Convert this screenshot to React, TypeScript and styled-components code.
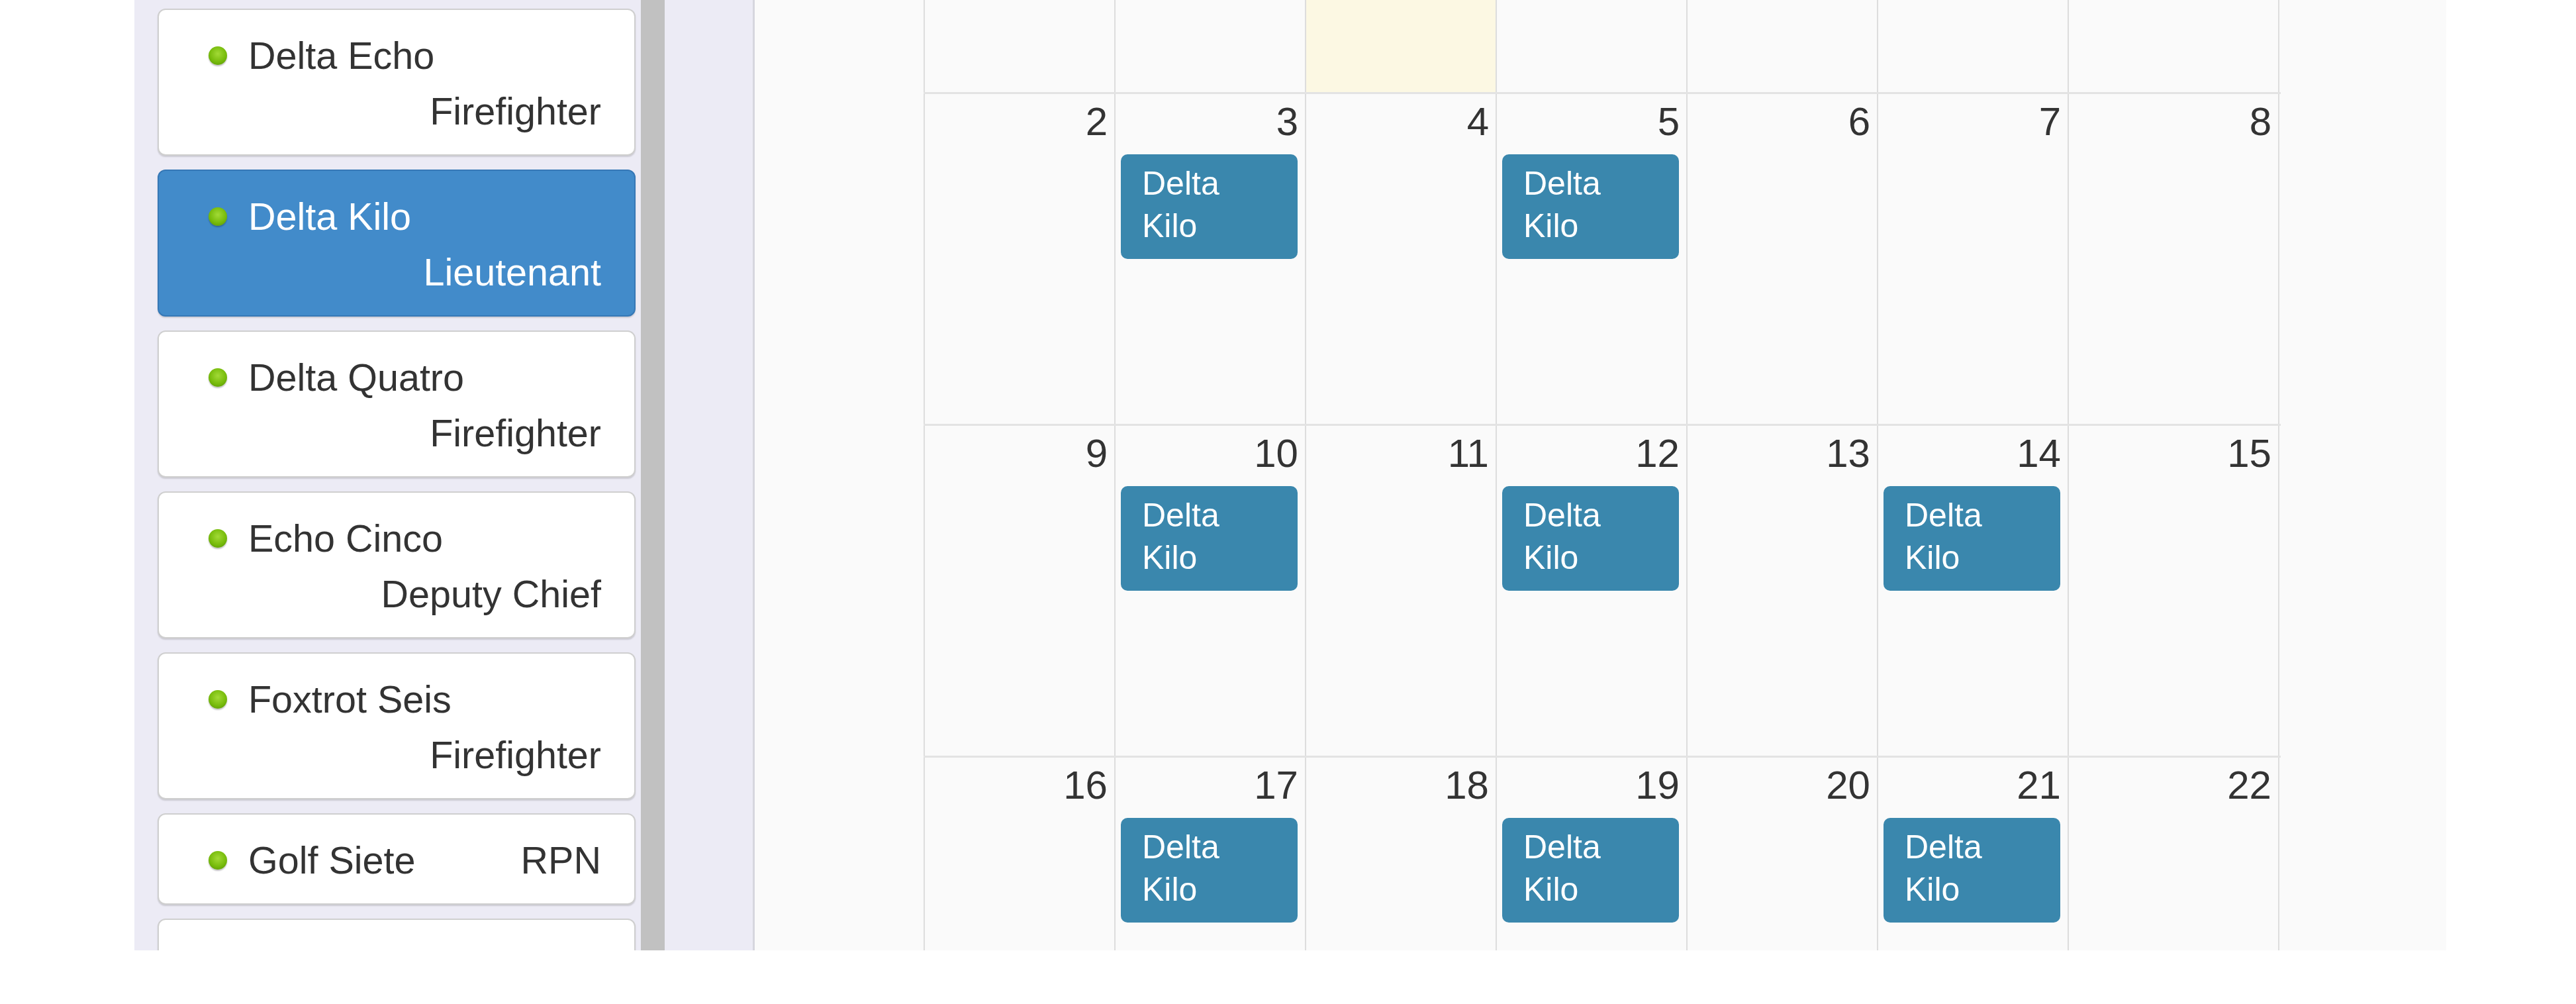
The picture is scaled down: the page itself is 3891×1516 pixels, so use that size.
import React from "react";
import styled, { createGlobalStyle } from "styled-components";

const GlobalStyle = createGlobalStyle`
  html, body {
    margin: 0;
    padding: 0;
    background: #fff;
  }
  body {
    font-family: "Liberation Sans", Arial, sans-serif;
    color: #333;
  }
`;

const SPage = styled.div`
  display: flex;
  height: 1435px;
  margin: 0 196px 0 203px;
  overflow: hidden;
`;

const SSidebar = styled.aside`
  display: flex;
  flex-shrink: 0;
  width: 934px;
  background: #ecebf5;
`;

const SStaffList = styled.div`
  display: flex;
  flex-direction: column;
  gap: 21px;
  width: 765px;
  padding: 13px 8px 0 35px;
  box-sizing: border-box;
`;

const SScrollThumb = styled.div`
  flex-shrink: 0;
  width: 36px;
  background: #c1c1c1;
`;

const SStaffCard = styled.div<{ $active?: boolean }>`
  display: flex;
  flex-wrap: wrap;
  align-items: center;
  flex-shrink: 0;
  padding: 27px 50px 23px 75px;
  border: 2px solid ${(p) => (p.$active ? "#3678b6" : "#cfcfcf")};
  border-radius: 12px;
  background: ${(p) => (p.$active ? "#428bca" : "#fff")};
  color: ${(p) => (p.$active ? "#fff" : "#333")};
  box-shadow: 0 2px 2px rgba(0, 0, 0, 0.14);
  font-size: 57.5px;
  line-height: 84px;
`;

const SNameGroup = styled.div`
  display: flex;
  align-items: center;
  gap: 32px;
  white-space: nowrap;
`;

const SStatusDot = styled.span`
  flex-shrink: 0;
  width: 28px;
  height: 28px;
  border-radius: 50%;
  background: radial-gradient(circle at 50% 40%, #a2da36 0%, #78bc0c 55%, #528f06 100%);
  box-shadow: 0 2px 2px rgba(0, 0, 0, 0.25);
`;

const SRole = styled.span`
  margin-left: auto;
  padding-left: 120px;
  white-space: nowrap;
`;

const SCalendar = styled.section`
  flex: 1;
  padding-left: 255px;
  border-left: 3px solid #d6d6de;
  background: #fafafa;
`;

const SWeek = styled.div<{ $height: number; $cut?: boolean }>`
  display: grid;
  grid-template-columns: repeat(6, 288px) 320px;
  box-sizing: border-box;
  width: 2050px;
  height: ${(p) => p.$height}px;
  border-top: ${(p) => (p.$cut ? "none" : "3px solid #e3e3e3")};
`;

const SDay = styled.div<{ $today?: boolean }>`
  display: flex;
  flex-direction: column;
  border-left: 2px solid #dddddd;
  background: ${(p) => (p.$today ? "#fcf8e3" : "transparent")};

  &:last-child {
    border-right: 2px solid #dddddd;
  }
`;

const SDayNum = styled.div`
  padding: 7px 10px 0 0;
  font-size: 60px;
  line-height: 69px;
  text-align: right;
  color: #333;
`;

const SEvent = styled.div`
  margin: 15px 11px 0 8px;
  padding: 12px 38px 18px 32px;
  border-radius: 10px;
  background: #3a87ad;
  color: #fff;
  font-size: 50px;
  line-height: 64px;
`;

type Staff = { name: string; role: string; active?: boolean };

const staff: Staff[] = [
  { name: "Delta Echo", role: "Firefighter" },
  { name: "Delta Kilo", role: "Lieutenant", active: true },
  { name: "Delta Quatro", role: "Firefighter" },
  { name: "Echo Cinco", role: "Deputy Chief" },
  { name: "Foxtrot Seis", role: "Firefighter" },
  { name: "Golf Siete", role: "RPN" },
  { name: "Hotel Ocho", role: "Firefighter" },
];

type Week = { start?: number; height: number; cut?: boolean; todayCol?: number; events: number[] };

const weeks: Week[] = [
  { height: 139, cut: true, todayCol: 2, events: [] },
  { start: 2, height: 501, events: [3, 5] },
  { start: 9, height: 501, events: [10, 12, 14] },
  { start: 16, height: 501, events: [17, 19, 21] },
];

export default function App() {
  return (
    <>
      <GlobalStyle />
      <SPage>
        <SSidebar>
          <SStaffList>
            {staff.map((s) => (
              <SStaffCard key={s.name} $active={s.active}>
                <SNameGroup>
                  <SStatusDot />
                  {s.name}
                </SNameGroup>
                <SRole>{s.role}</SRole>
              </SStaffCard>
            ))}
          </SStaffList>
          <SScrollThumb />
        </SSidebar>
        <SCalendar>
          {weeks.map((w, wi) => (
            <SWeek key={wi} $height={w.height} $cut={w.cut}>
              {Array.from({ length: 7 }, (_, i) => {
                const day = w.start !== undefined ? w.start + i : undefined;
                return (
                  <SDay key={i} $today={w.todayCol === i}>
                    {day !== undefined && <SDayNum>{day}</SDayNum>}
                    {day !== undefined && w.events.includes(day) && (
                      <SEvent>Delta Kilo</SEvent>
                    )}
                  </SDay>
                );
              })}
            </SWeek>
          ))}
        </SCalendar>
      </SPage>
    </>
  );
}
